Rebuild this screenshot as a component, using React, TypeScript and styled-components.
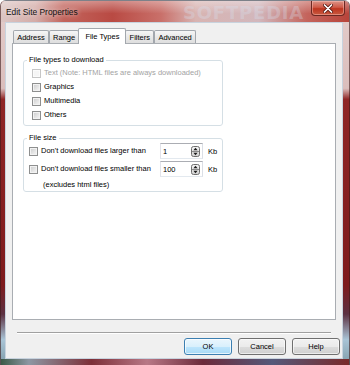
import React from 'react';
import styled, { createGlobalStyle } from 'styled-components';

const GlobalStyle = createGlobalStyle`
  html, body {
    margin: 0;
    padding: 0;
    background: #ffffff;
  }
  body {
    font-family: 'Liberation Sans', Arial, sans-serif;
  }
`;

const Window = styled.div`
  position: relative;
  width: 350px;
  height: 365px;
  box-sizing: border-box;
  display: flex;
  flex-direction: column;
  padding-bottom: 6px;
  border-radius: 6px 6px 0 0;
  overflow: hidden;
  border: 1px solid rgba(60, 25, 25, 0.6);
  border-top-color: rgba(120, 80, 80, 0.35);
  border-bottom: none;
  background:
    linear-gradient(90deg, #3c5a48 0%, #8d97a3 8%, #7c2f38 26%, #b87886 42%, #6c2a3a 58%, #55597a 78%, #7a2a2a 100%) bottom / 100% 6px no-repeat,
    linear-gradient(180deg, #e4cdcb 0%, #dbbebc 24%, #8f2626 27%, #7e1b1d 78%, #5c3142 86%, #a9c4d6 93%, #7f9ca8 100%);
`;

const TitleBar = styled.div`
  position: relative;
  height: 21px;
  flex: none;
  display: flex;
  align-items: center;
  padding-left: 5px;
  background:
    linear-gradient(180deg, rgba(255, 255, 255, 0.35) 0%, rgba(255, 255, 255, 0) 60%),
    linear-gradient(90deg, #dcc6c4 0%, #d4aca8 10%, #c2645c 18%, #b94a43 32%, #c9706a 46%, #d8b4b2 56%, #d2b7bc 74%, #c4645c 88%, #b8443a 100%);
`;

const Title = styled.span`
  font-size: 8.4px;
  color: #111;
  text-shadow: 0 0 5px rgba(255, 255, 255, 0.9);
  margin-top: 1px;
`;

const Watermark = styled.span`
  position: absolute;
  left: 182px;
  top: 1px;
  font-family: 'DejaVu Sans', sans-serif;
  font-weight: bold;
  font-size: 18px;
  letter-spacing: 0.8px;
  color: rgba(215, 225, 240, 0.32);
  pointer-events: none;
`;

const CloseButton = styled.div`
  margin-left: auto;
  margin-right: 4px;
  align-self: flex-start;
  width: 34px;
  height: 15px;
  box-sizing: border-box;
  display: flex;
  align-items: center;
  justify-content: center;
  border: 1px solid #6b2822;
  border-top: none;
  border-radius: 0 0 4px 4px;
  background: linear-gradient(180deg, #dc9488 0%, #cf5a48 45%, #bd3520 55%, #c85a40 100%);
  box-shadow: inset 0 0 0 1px rgba(255, 200, 190, 0.45);
`;

const ClientFrame = styled.div`
  flex: 1;
  display: flex;
  flex-direction: column;
  margin: 0 6px 0 4px;
  border: 1px solid #c8d3de;
  background: #f0f0f0;
  padding: 5px 6px 3px 6px;
`;

const TabStrip = styled.div`
  display: flex;
  align-items: flex-end;
  height: 15px;
  padding-left: 1px;
  position: relative;
  z-index: 1;
`;

const Tab = styled.div<{ $active?: boolean }>`
  box-sizing: border-box;
  height: ${p => (p.$active ? '16px' : '13px')};
  margin: ${p => (p.$active ? '0 -1px -1px -1px' : '0')};
  padding: ${p => (p.$active ? '0 6px' : '0 3.2px')};
  display: flex;
  align-items: center;
  font-size: 7.5px;
  color: #000;
  border: 1px solid #a2a7ad;
  border-bottom: none;
  border-radius: 2px 2px 0 0;
  background: ${p => (p.$active ? '#ffffff' : 'linear-gradient(180deg, #f6f6f6 0%, #e8e8e8 50%, #dedede 100%)')};
`;

const Panel = styled.div`
  flex: 1;
  border: 1px solid #a9adb2;
  background: #ffffff;
  padding: 12px 0 0 10px;
  display: flex;
  flex-direction: column;
`;

const Group = styled.fieldset<{ $spaced?: boolean }>`
  margin: ${p => (p.$spaced ? '8px 0 0 0' : '0')};
  padding: 0;
  width: 200px;
  box-sizing: border-box;
  min-inline-size: 0;
  border: 1px solid #d5dfe5;
  border-radius: 3px;
`;

const Legend = styled.legend`
  margin-left: 3px;
  padding: 0 2px;
  font-size: 7.5px;
  line-height: 8px;
  color: #000;
`;

const GroupBody = styled.div<{ $indent: number; $top?: number; $bottom?: number }>`
  display: flex;
  flex-direction: column;
  padding: ${p => p.$top ?? 2}px 0 ${p => p.$bottom ?? 3}px ${p => p.$indent}px;
`;

const CheckRow = styled.div`
  display: flex;
  align-items: center;
  gap: 3px;
  height: 14px;
`;

const Box = styled.span<{ $disabled?: boolean }>`
  flex: none;
  width: 9px;
  height: 9px;
  box-sizing: border-box;
  border: 1px solid ${p => (p.$disabled ? '#c6c6c6' : '#8e8f8f')};
  background: ${p =>
    p.$disabled
      ? '#f5f5f5'
      : 'linear-gradient(135deg, #c9cacb 0%, #e4e4e4 55%, #f7f7f7 100%)'};
  box-shadow: inset 0 0 0 1px ${p => (p.$disabled ? '#fbfbfb' : '#f2f2f2')};
`;

const Label = styled.span<{ $disabled?: boolean }>`
  font-size: 7.5px;
  line-height: 10px;
  white-space: nowrap;
  color: ${p => (p.$disabled ? '#a3a3a3' : '#000')};
`;

const SizeRow = styled.div`
  display: flex;
  align-items: center;
  height: 18px;
`;

const SizeCheck = styled.div`
  display: flex;
  align-items: center;
  gap: 3px;
  width: 131px;
  flex: none;
`;

const SpinBox = styled.div`
  width: 43px;
  height: 16px;
  box-sizing: border-box;
  display: flex;
  align-items: center;
  padding: 0 2px;
  border: 1px solid;
  border-color: #abadb3 #dbdfe6 #e3e9ef #e2e3ea;
  background: #fff;
  font-size: 7.5px;
  color: #000;
`;

const SpinArrows = styled.svg`
  margin-left: auto;
  flex: none;
`;

const Unit = styled.span`
  margin-left: 5px;
  font-size: 7.5px;
  color: #000;
`;

const Note = styled.div`
  height: 12px;
  display: flex;
  align-items: center;
  padding-left: 14px;
  font-size: 7.5px;
  color: #000;
`;

const Separator = styled.div`
  margin: 12px 5px 0 5px;
  border-top: 1px solid #a0a0a0;
  border-bottom: 1px solid #ffffff;
`;

const ButtonRow = styled.div`
  display: flex;
  justify-content: flex-end;
  gap: 6px;
  margin-top: 4px;
  padding-right: 2px;
  margin-right: -6px;
`;

const Button = styled.div<{ $default?: boolean }>`
  width: 48px;
  height: 17px;
  box-sizing: border-box;
  display: flex;
  align-items: center;
  justify-content: center;
  font-size: 7.5px;
  color: #000;
  border: 1px solid ${p => (p.$default ? '#3c7fb1' : '#707070')};
  border-radius: 3px;
  background: ${p =>
    p.$default
      ? 'linear-gradient(180deg, #eaf6fd 0%, #d9f0fc 50%, #bee6fd 51%, #a7d9f5 100%)'
      : 'linear-gradient(180deg, #f2f2f2 0%, #ebebeb 50%, #dddddd 51%, #cfcfcf 100%)'};
  box-shadow: inset 0 0 0 1px ${p => (p.$default ? 'rgba(255,255,255,0.7)' : 'rgba(255,255,255,0.6)')};
`;

const Spinner: React.FC = () => (
  <SpinArrows width="9" height="11" viewBox="0 0 9 11">
    <defs>
      <linearGradient id="spg" x1="0" y1="0" x2="0" y2="1">
        <stop offset="0" stopColor="#f4f4f4" />
        <stop offset="1" stopColor="#d2d2d2" />
      </linearGradient>
    </defs>
    <rect x="0.5" y="0.5" width="8" height="10" rx="2" fill="url(#spg)" stroke="#6f6f6f" />
    <line x1="1" y1="5.5" x2="8" y2="5.5" stroke="#8a8a8a" />
    <path d="M4.5 1.8 L6.6 4.2 L2.4 4.2 Z" fill="#1a1a1a" />
    <path d="M4.5 9.2 L6.6 6.8 L2.4 6.8 Z" fill="#1a1a1a" />
  </SpinArrows>
);

const tabs = ['Address', 'Range', 'File Types', 'Filters', 'Advanced'];

const fileTypes = [
  { label: 'Text (Note: HTML files are always downloaded)', disabled: true },
  { label: 'Graphics' },
  { label: 'Multimedia' },
  { label: 'Others' },
];

export default function App() {
  return (
    <>
      <GlobalStyle />
      <Window>
        <TitleBar>
          <Title>Edit Site Properties</Title>
          <Watermark>SOFTPEDIA</Watermark>
          <CloseButton>
            <svg width="10" height="9" viewBox="0 0 10 9">
              <path d="M1.5 1 L8.5 8 M8.5 1 L1.5 8" stroke="#5a1810" strokeWidth="3.2" strokeLinecap="round" />
              <path d="M1.5 1 L8.5 8 M8.5 1 L1.5 8" stroke="#ffffff" strokeWidth="1.7" strokeLinecap="round" />
            </svg>
          </CloseButton>
        </TitleBar>
        <ClientFrame>
          <TabStrip>
            {tabs.map(t => (
              <Tab key={t} $active={t === 'File Types'}>
                {t}
              </Tab>
            ))}
          </TabStrip>
          <Panel>
            <Group>
              <Legend>File types to download</Legend>
              <GroupBody $indent={8}>
                {fileTypes.map(f => (
                  <CheckRow key={f.label}>
                    <Box $disabled={f.disabled} />
                    <Label $disabled={f.disabled}>{f.label}</Label>
                  </CheckRow>
                ))}
              </GroupBody>
            </Group>
            <Group $spaced>
              <Legend>File size</Legend>
              <GroupBody $indent={5} $top={0} $bottom={1}>
                <SizeRow>
                  <SizeCheck>
                    <Box />
                    <Label>Don't download files larger than</Label>
                  </SizeCheck>
                  <SpinBox>
                    1
                    <Spinner />
                  </SpinBox>
                  <Unit>Kb</Unit>
                </SizeRow>
                <SizeRow>
                  <SizeCheck>
                    <Box />
                    <Label>Don't download files smaller than</Label>
                  </SizeCheck>
                  <SpinBox>
                    100
                    <Spinner />
                  </SpinBox>
                  <Unit>Kb</Unit>
                </SizeRow>
                <Note>(excludes html files)</Note>
              </GroupBody>
            </Group>
          </Panel>
          <Separator />
          <ButtonRow>
            <Button $default>OK</Button>
            <Button>Cancel</Button>
            <Button>Help</Button>
          </ButtonRow>
        </ClientFrame>
      </Window>
    </>
  );
}
